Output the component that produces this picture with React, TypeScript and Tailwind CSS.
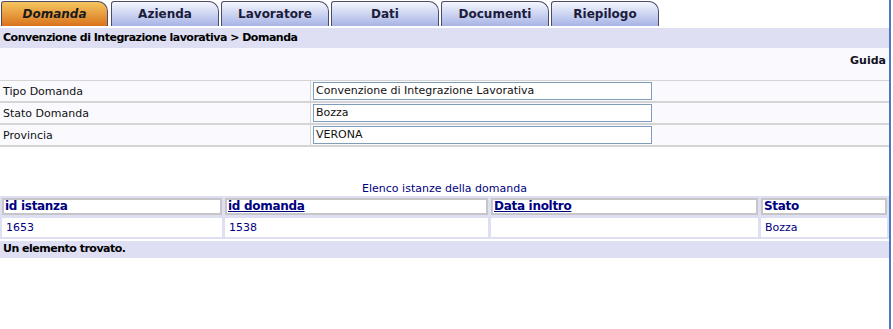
import React from 'react'

const tabs = ['Domanda', 'Azienda', 'Lavoratore', 'Dati', 'Documenti', 'Riepilogo']

const fields = [
  { label: 'Tipo Domanda', value: 'Convenzione di Integrazione Lavorativa' },
  { label: 'Stato Domanda', value: 'Bozza' },
  { label: 'Provincia', value: 'VERONA' }
]

const columns = [
  { label: 'id istanza', link: false },
  { label: 'id domanda', link: true },
  { label: 'Data inoltro', link: true },
  { label: 'Stato', link: false }
]

const row = ['1653', '1538', '', 'Bozza']

export default function App() {
  return (
    <div className="flex h-[329px] w-[893px] bg-white font-['DejaVu_Sans',Verdana,sans-serif] text-[11px] text-black">
      <div className="w-[889px]">
        {/* tabs */}
        <div className="flex h-[26px] items-end pl-[1px]">
          {tabs.map((tab, i) => (
            <div
              key={tab}
              className={
                i === 0
                  ? 'mr-[3px] flex h-[25px] w-[107px] items-center justify-center rounded-tl-[3px] rounded-tr-[10px] border border-b-0 border-[#4b4b6b] bg-gradient-to-b from-[#f4c65e] to-[#d8731a] text-[12px] font-bold italic text-[#1a1a1a]'
                  : 'mr-[2px] flex h-[25px] w-[108px] items-center justify-center rounded-tl-[3px] rounded-tr-[10px] border border-b-0 border-[#4b4b6b] bg-gradient-to-b from-[#f5f6fd] to-[#a7b3e5] text-[12px] font-bold text-[#1c1c3c]'
              }
            >
              {tab}
            </div>
          ))}
        </div>

        {/* breadcrumb */}
        <div className="mt-[2px] flex h-[20px] items-center bg-[#dedff2] pl-[3px] font-bold tracking-[-0.5px]">
          Convenzione di Integrazione lavorativa &gt; Domanda
        </div>

        {/* form */}
        <div className="bg-[#f9f9fe]">
          <div className="h-[32px] pr-[3px] pt-[5px] text-right font-bold text-[#111122]">Guida</div>
          <div className="border-t border-[#d4d4d4]">
            {fields.map((f) => (
              <div key={f.label} className="flex h-[22px] border-b-2 border-[#d4d4d4]">
                <div className="w-[311px] border-r border-[#d4d4d4] pl-[3px] pt-[3px] text-[#111]">{f.label}</div>
                <div className="pl-[2px] pt-[1px]">
                  <div className="flex h-[18px] w-[339px] items-center border border-[#7f9db9] bg-white pl-[2px] text-[#111]">
                    {f.value}
                  </div>
                </div>
              </div>
            ))}
          </div>
        </div>

        {/* list */}
        <div className="mt-[35px] text-center leading-[13px] text-[#000080]">Elenco istanze della domanda</div>
        <div className="mt-[1px] grid grid-cols-[220px_263px_267px_126px] gap-x-[3px] gap-y-[3px] bg-[#dedff2] p-[2px]">
          {columns.map((c) => (
            <div key={c.label} className="h-[17px] border-2 border-[#c6c6c6] bg-white pl-[1px] text-[12px] font-bold leading-[13px] tracking-[-0.3px] text-[#000080]">
              <span className={c.link ? 'underline' : ''}>{c.label}</span>
            </div>
          ))}
          {row.map((v, i) => (
            <div key={i} className="h-[19px] bg-white pl-[4px] pt-[4px] leading-[12px] text-[#000080]">
              {v}
            </div>
          ))}
        </div>
        <div className="mt-[2px] flex h-[17px] items-center bg-[#dedff2] pl-[3px] font-bold tracking-[-0.5px]">Un elemento trovato.</div>
      </div>
      <div className="w-[2px] bg-[#4a78c8]" />
      <div className="w-[2px] bg-[#ffffff]" />
    </div>
  )
}
